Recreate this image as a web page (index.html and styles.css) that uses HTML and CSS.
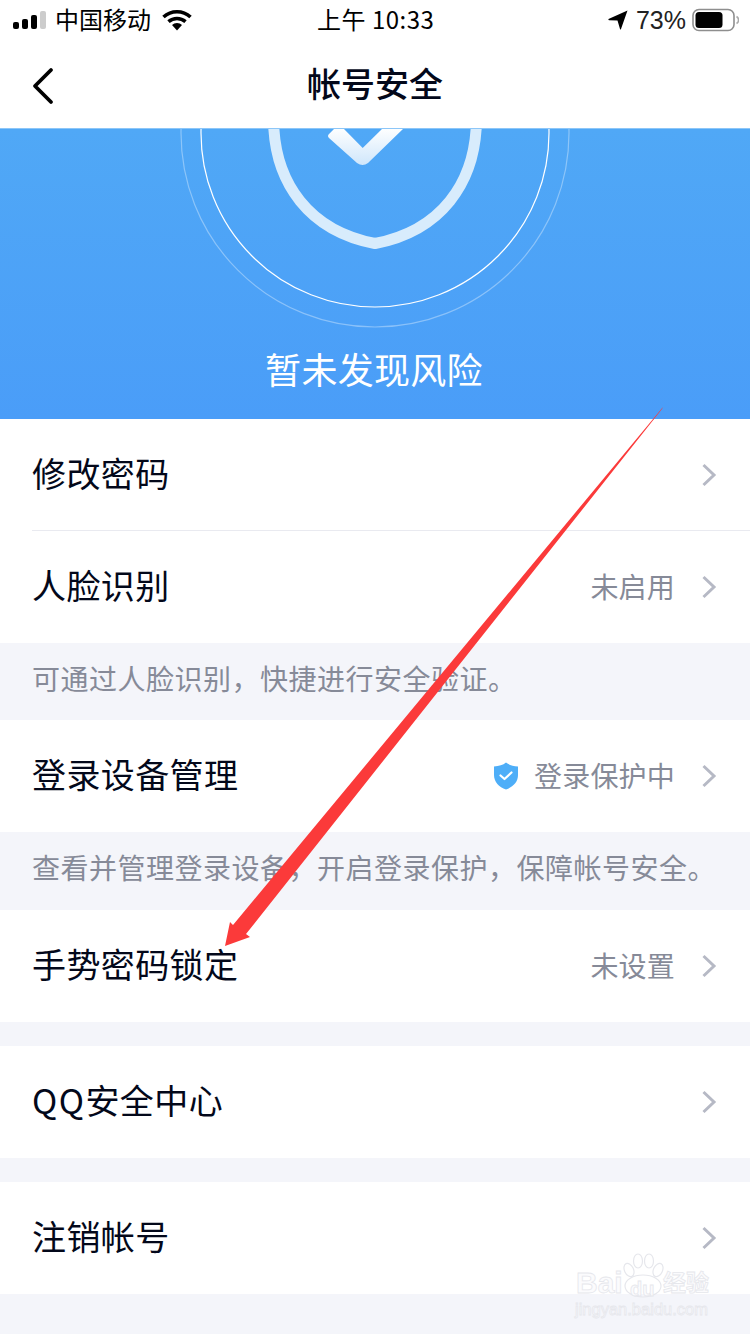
FILE: index.html
```html
<!DOCTYPE html>
<html lang="zh-CN">
<head>
    <meta charset="UTF-8">
    <meta name="viewport" content="width=device-width, initial-scale=1.0">
    <title>帐号安全</title>
    <link rel="stylesheet" href="styles.css">
</head>
<body>
<div class="page">
    <!-- 状态栏 -->
    <div class="status-bar">
        <div class="status-left">
            <svg class="signal" width="34" height="20" viewBox="0 0 34 20">
                <rect x="0" y="12" width="6" height="7" rx="2" fill="#000"/>
                <rect x="9" y="9" width="6" height="10" rx="2" fill="#000"/>
                <rect x="18" y="5" width="6" height="14" rx="2" fill="#000"/>
                <rect x="27" y="1" width="6" height="18" rx="2" fill="#ccc"/>
            </svg>
            <span class="carrier">中国移动</span>
            <svg class="wifi" width="30" height="22" viewBox="0 0 30 22">
                <path d="M1.500 8 A20 20 0 0 1 28.500 8" fill="none" stroke="#000" stroke-width="3.600"/>
                <path d="M6.500 12.600 A13 13 0 0 1 23.500 12.600" fill="none" stroke="#000" stroke-width="3.600"/>
                <path d="M10 16 A7 7 0 0 1 20 16 L15 21.500 Z" fill="#000"/>
            </svg>
        </div>
        <div class="status-time">上午 10:33</div>
        <div class="status-right">
            <svg class="locate" width="20" height="20" viewBox="0 0 20 20">
                <path d="M19.500 0.500 L0.500 9 Q0 10 1 10.200 L9.500 10.500 L12 19 Q12.500 20 13 19 Z" fill="#000"/>
            </svg>
            <span class="percent">73%</span>
            <svg class="battery" width="47" height="24" viewBox="0 0 47 24">
                <rect x="1" y="1.500" width="41" height="21" rx="6" fill="none" stroke="#8e8e8e" stroke-width="1.600"/>
                <rect x="3.500" y="4" width="27" height="16" rx="3.500" fill="#000"/>
                <path d="M44.500 8.500 A4 4 0 0 1 44.500 15.500" fill="none" stroke="#aaa" stroke-width="1.600"/>
            </svg>
        </div>
    </div>

    <!-- 导航栏 -->
    <div class="nav-bar">
        <svg class="back" width="22" height="38" viewBox="0 0 22 38">
            <path d="M19 3 L3 19 L19 35" fill="none" stroke="#000" stroke-width="3.800" stroke-linecap="round" stroke-linejoin="round"/>
        </svg>
        <div class="nav-title">帐号安全</div>
    </div>

    <!-- 顶部状态 -->
    <div class="hero">
        <svg class="hero-art" width="750" height="203" viewBox="0 0 750 203">
            <defs>
                <linearGradient id="checkFill" x1="0" y1="0" x2="0" y2="1">
                    <stop offset="0" stop-color="#fff"/>
                    <stop offset="1" stop-color="#cfe6fb"/>
                </linearGradient>
            </defs>
            <circle cx="375" cy="4" r="194" fill="none" stroke="#fff" stroke-opacity=".35" stroke-width="1.200"/>
            <circle cx="375" cy="4" r="174" fill="none" stroke="#fff" stroke-width="1.200"/>
            <path d="M273.500 -10 C274 55 310 102 375 114.500 C440 102 476 55 476.500 -10" fill="none" stroke="#d8ecfc" stroke-width="11" stroke-linejoin="round"/>
            <path d="M335 -1 L329 5 Q327 7 329 9 L357 34 Q362.700 38 368 34 L404 -1 L383 -1 L362.700 19 L343 -1 Z" fill="url(#checkFill)"/>
        </svg>
        <div class="hero-text">暂未发现风险</div>
    </div>

    <div class="group">
        <div class="row row-line">
            <span class="row-label">修改密码</span>
            <div class="row-right">
                <svg class="chevron" width="16" height="24" viewBox="0 0 16 24"><path d="M2.500 2 L13 12 L2.500 22" fill="none" stroke="#b6b9c5" stroke-width="3"/></svg>
            </div>
        </div>
        <div class="row">
            <span class="row-label">人脸识别</span>
            <div class="row-right">
                <span class="row-value">未启用</span>
                <svg class="chevron" width="16" height="24" viewBox="0 0 16 24"><path d="M2.500 2 L13 12 L2.500 22" fill="none" stroke="#b6b9c5" stroke-width="3"/></svg>
            </div>
        </div>
    </div>
    <div class="note">可通过人脸识别，快捷进行安全验证。</div>

    <div class="group">
        <div class="row">
            <span class="row-label">登录设备管理</span>
            <div class="row-right">
                <svg class="badge" width="26" height="28" viewBox="0 0 26 28">
                    <path d="M13 0.500 C16 3 20 4.200 25 4.500 L25 13 C25 20 20 25 13 27.500 C6 25 1 20 1 13 L1 4.500 C6 4.200 10 3 13 0.500 Z" fill="#4eaef8"/>
                    <path d="M7.500 13.500 L11.500 17 L18.500 10.500" fill="none" stroke="#fff" stroke-width="2.200" stroke-linecap="round" stroke-linejoin="round"/>
                </svg>
                <span class="row-value">登录保护中</span>
                <svg class="chevron" width="16" height="24" viewBox="0 0 16 24"><path d="M2.500 2 L13 12 L2.500 22" fill="none" stroke="#b6b9c5" stroke-width="3"/></svg>
            </div>
        </div>
    </div>
    <div class="note note-tall">查看并管理登录设备，开启登录保护，保障帐号安全。</div>

    <div class="group">
        <div class="row">
            <span class="row-label">手势密码锁定</span>
            <div class="row-right">
                <span class="row-value">未设置</span>
                <svg class="chevron" width="16" height="24" viewBox="0 0 16 24"><path d="M2.500 2 L13 12 L2.500 22" fill="none" stroke="#b6b9c5" stroke-width="3"/></svg>
            </div>
        </div>
    </div>

    <div class="group group-gap">
        <div class="row">
            <span class="row-label"><span class="latin">QQ</span>安全中心</span>
            <div class="row-right">
                <svg class="chevron" width="16" height="24" viewBox="0 0 16 24"><path d="M2.500 2 L13 12 L2.500 22" fill="none" stroke="#b6b9c5" stroke-width="3"/></svg>
            </div>
        </div>
    </div>

    <div class="group group-gap">
        <div class="row">
            <span class="row-label">注销帐号</span>
            <div class="row-right">
                <svg class="chevron" width="16" height="24" viewBox="0 0 16 24"><path d="M2.500 2 L13 12 L2.500 22" fill="none" stroke="#b6b9c5" stroke-width="3"/></svg>
            </div>
        </div>
    </div>

    <!-- 红色箭头标注 -->
    <svg class="annotation" width="750" height="1334" viewBox="0 0 750 1334">
        <polygon points="663,407 662,409 246,934 250,937 225,946 230,922 233,925" fill="#fb3a3a"/>
    </svg>

    <!-- 水印 -->
    <div class="watermark">
        <svg class="paw" width="44" height="46" viewBox="0 0 44 46">
            <g fill="none" stroke="#e6e7ec" stroke-width="1.200">
                <ellipse cx="7" cy="17" rx="4.500" ry="7" transform="rotate(-25 7 17)"/>
                <ellipse cx="16" cy="8" rx="4.500" ry="7"/>
                <ellipse cx="27" cy="8" rx="4.500" ry="7"/>
                <ellipse cx="36" cy="17" rx="4.500" ry="7" transform="rotate(25 36 17)"/>
                <ellipse cx="21" cy="33" rx="18" ry="11"/>
            </g>
        </svg>
        <div class="wm-top">
            <span class="wm-bai">Bai</span>
            <span class="wm-du">du</span>
            <span class="wm-cn">经验</span>
        </div>
        <div class="wm-url">jingyan.baidu.com</div>
    </div>
</div>
</body>
</html>
```

FILE: styles.css
```css
* {
    box-sizing: border-box;
}
body {
    margin: 0;
    background-color: #f4f5fa;
    font-family: "Noto Sans CJK SC", "Liberation Sans", sans-serif;
}
.page {
    position: relative;
    width: 750px;
    height: 1334px;
    overflow: hidden;
    background-color: #f4f5fa;
}
.status-bar {
    position: relative;
    display: flex;
    align-items: center;
    justify-content: space-between;
    height: 42px;
    padding: 0 11px 2px 13px;
    background-color: #fff;
    color: #000;
    font-size: 24px;
}
.status-left {
    display: flex;
    align-items: center;
}
.carrier {
    margin: 0 0 2px 8px;
    line-height: 30px;
}
.wifi {
    margin-left: 11px;
}
.status-time {
    position: absolute;
    left: 317px;
    top: 4px;
    line-height: 30px;
    font-size: 24px;
    letter-spacing: .5px;
}
.status-right {
    display: flex;
    align-items: center;
    margin-left: auto;
}
.percent {
    margin: 0 6px 0 8px;
    font-family: "Liberation Sans", sans-serif;
    font-size: 25px;
    color: #222;
}
.nav-bar {
    position: relative;
    display: flex;
    align-items: center;
    justify-content: center;
    height: 86px;
    padding-bottom: 4px;
    background-color: #fff;
}
.back {
    position: absolute;
    left: 32px;
    top: 25px;
}
.nav-title {
    font-size: 34px;
    font-weight: 500;
    color: #03081a;
    line-height: 60px;
}
.hero {
    height: 291px;
    background: linear-gradient(to bottom, #50a8f6, #4a9df8);
    border-top: 1px solid #8cc6f8;
    overflow: hidden;
}
.hero-art {
    display: block;
}
.hero-text {
    margin-top: 11px;
    padding-right: 2px;
    text-align: center;
    font-size: 36px;
    line-height: 50px;
    letter-spacing: .3px;
    color: #fff;
}
.group {
    background-color: #fff;
}
.group-gap {
    margin-top: 24px;
}
.row {
    position: relative;
    display: flex;
    align-items: center;
    justify-content: space-between;
    height: 112px;
    padding: 0 33px 0 32px;
}
.row-line::after {
    content: "";
    position: absolute;
    left: 32px;
    right: 0;
    bottom: 0;
    height: 1px;
    background-color: #e9eaf0;
}
.row-label {
    margin-bottom: 6px;
    font-size: 34px;
    letter-spacing: .4px;
    color: #03081a;
}
.latin {
    letter-spacing: 1.5px;
}
.row-right {
    display: flex;
    align-items: center;
}
.row-value {
    margin-bottom: 3px;
    font-size: 28px;
    letter-spacing: .2px;
    color: #868a98;
}
.badge {
    margin-right: 15px;
}
.chevron {
    margin-left: 26px;
}
.note {
    height: 77px;
    padding-left: 32px;
    font-size: 28px;
    line-height: 71px;
    letter-spacing: .5px;
    color: #868a98;
}
.note-tall {
    height: 78px;
}
.annotation {
    position: absolute;
    left: 0;
    top: 0;
    pointer-events: none;
}
.watermark {
    position: absolute;
    left: 574px;
    top: 1253px;
    width: 140px;
    height: 64px;
    color: #fbfbfd;
    -webkit-text-stroke: .8px #e6e7ec;
}
.paw {
    position: absolute;
    left: 48px;
    top: 0;
}
.wm-top {
    position: absolute;
    left: 0;
    top: 12px;
    width: 140px;
    height: 36px;
}
.wm-bai,
.wm-du,
.wm-cn {
    position: absolute;
    font-family: "Liberation Sans", sans-serif;
    font-weight: 700;
}
.wm-bai {
    left: 2px;
    top: 1px;
    font-size: 30px;
    line-height: 34px;
}
.wm-du {
    left: 56px;
    top: 11px;
    font-size: 20px;
    line-height: 26px;
}
.wm-cn {
    left: 89px;
    top: 1px;
    font-family: "Noto Sans CJK SC", sans-serif;
    font-size: 23px;
    line-height: 30px;
    white-space: nowrap;
}
.wm-url {
    position: absolute;
    left: 1px;
    top: 46px;
    font-family: "Liberation Sans", sans-serif;
    font-size: 16.500px;
    line-height: 20px;
    white-space: nowrap;
}
```
